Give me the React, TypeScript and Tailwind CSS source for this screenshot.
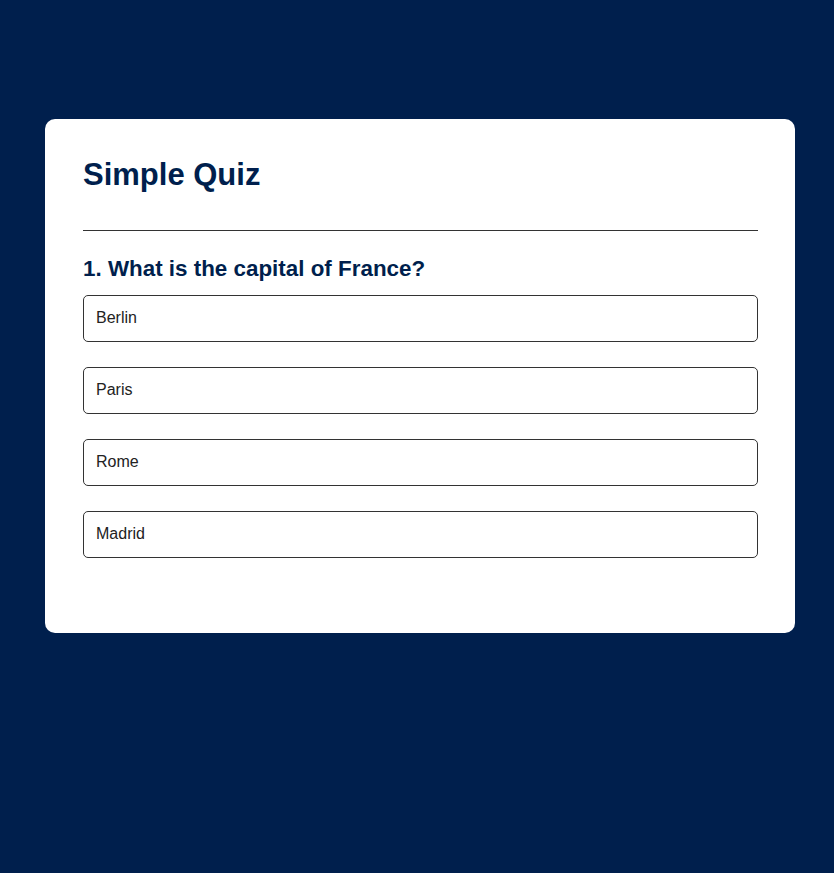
import React from "react";

export default function App() {
  const options = ["Berlin", "Paris", "Rome", "Madrid"];
  return (
    <div
      className="min-h-[873px] w-full bg-[#001f4d] pt-[119px] pl-[45px]"
      style={{ fontFamily: '"Liberation Sans", Arial, sans-serif' }}
    >
      <div className="w-[750px] rounded-[10px] bg-white pl-[38px] pr-[37px] pt-[37px] pb-[75px]">
        <h1 className="text-[31px] leading-[37px] font-bold text-[#001f4d]">Simple Quiz</h1>
        <div className="mt-[37px] h-px bg-[#333]" />
        <h2 className="mt-[25px] text-[22.4px] leading-[26px] font-bold text-[#001f4d]">
          1. What is the capital of France?
        </h2>
        <div className="mt-[13px] flex flex-col gap-[25px]">
          {options.map((o) => (
            <div
              key={o}
              className="flex h-[47px] items-center rounded-[5px] border border-[#333] bg-white px-3 pb-[2px] text-[16px] text-[#222]"
            >
              {o}
            </div>
          ))}
        </div>
      </div>
    </div>
  );
}
